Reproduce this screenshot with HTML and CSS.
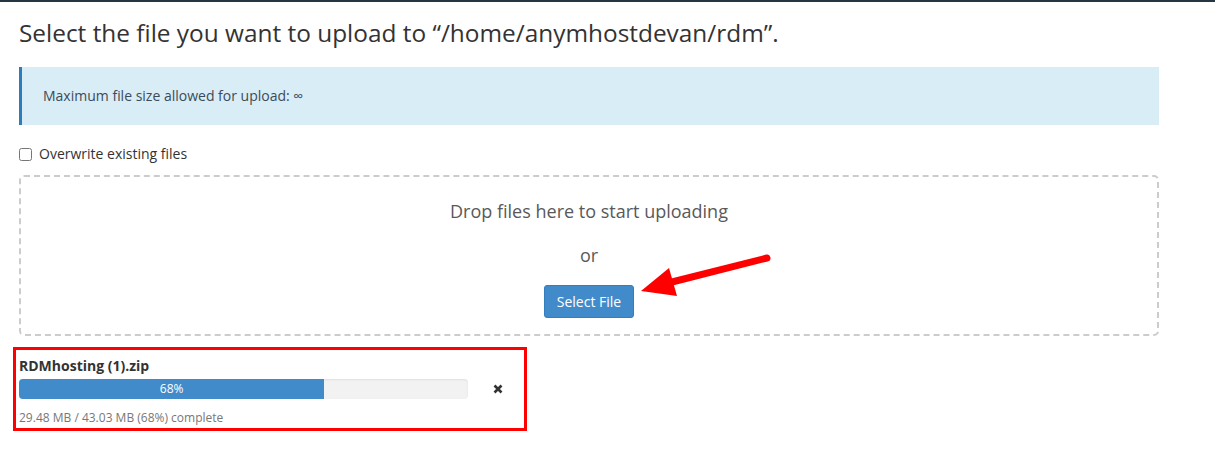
FILE: index.html
```html
<!DOCTYPE html>
<html lang="en">
<head>
<meta charset="utf-8">
<title>Upload</title>
<link rel="stylesheet" href="styles.css">
</head>
<body>
<div class="topbar"></div>
<main class="page">
  <h1 class="title">Select the file you want to upload to “/home/anymhostdevan/rdm”.</h1>
  <div class="alert">Maximum file size allowed for upload: ∞</div>
  <label class="check-row"><input type="checkbox" class="check"> Overwrite existing files</label>
  <section class="dropzone">
    <p class="drop-text">Drop files here to start uploading</p>
    <p class="drop-or">or</p>
    <button class="btn" type="button">Select File</button>
  </section>
  <div class="upload">
    <div class="file-name">RDMhosting (1).zip</div>
    <div class="progress-row">
      <div class="progress"><div class="progress-fill" style="width:68%">68%</div></div>
      <svg class="cancel" width="10" height="10" viewBox="0 0 10 10"><path d="M1.5 1.5 L8.5 8.5 M8.5 1.5 L1.5 8.5" stroke="#333" stroke-width="2.6" stroke-linecap="butt"/></svg>
    </div>
    <div class="status">29.48 MB / 43.03 MB (68%) complete</div>
  </div>
</main>
<div class="mark-box"></div>
<svg class="arrow" width="1215" height="453" viewBox="0 0 1215 453">
  <line x1="767" y1="258" x2="668" y2="283" stroke="#f00" stroke-width="7" stroke-linecap="round"/>
  <polygon points="641,291 669,268 677,296" fill="#f00"/>
</svg>
</body>
</html>
```
FILE: styles.css
```css
html, body {
  margin: 0;
  padding: 0;
  background: #fff;
}
body {
  font-family: "Open Sans", "Liberation Sans", sans-serif;
  color: #333;
  width: 1215px;
  height: 453px;
  overflow: hidden;
  position: relative;
}
.topbar {
  height: 2px;
  background: #253544;
}
.page {
  padding: 0 0 0 19px;
  width: 1140px;
}
.title {
  margin: 18px 0 0;
  font-size: 24.4px;
  font-weight: 400;
  line-height: 26px;
  color: #333;
}
.alert {
  margin-top: 21px;
  background: #d9edf7;
  border-left: 3px solid #2d7dba;
  padding: 20px 21px;
  font-size: 14px;
  line-height: 18px;
  color: #3b4b58;
}
.check-row {
  display: flex;
  align-items: center;
  margin-top: 19px;
  height: 20px;
  font-size: 14px;
  line-height: 20px;
  color: #333;
}
.check {
  width: 13px;
  height: 13px;
  margin: 0 7px 0 0;
}
.dropzone {
  margin-top: 11px;
  border: 2px dashed #ccc;
  border-radius: 5px;
  padding: 22px 0 16px;
  display: flex;
  flex-direction: column;
  align-items: center;
  color: #595959;
}
.drop-text {
  margin: 0;
  font-size: 18px;
  line-height: 24px;
}
.drop-or {
  margin: 20px 0 0;
  font-size: 18px;
  line-height: 24px;
}
.btn {
  margin-top: 18px;
  font-family: "Open Sans", "Liberation Sans", sans-serif;
  font-size: 14px;
  line-height: 19px;
  padding: 6px 12px;
  color: #fff;
  background: #428bca;
  border: 1px solid #357ebd;
  border-radius: 3px;
}
.upload {
  margin-top: 20px;
  width: 500px;
}
.file-name {
  font-size: 14px;
  font-weight: 700;
  line-height: 20px;
  color: #333;
}
.progress-row {
  margin-top: 3px;
  display: flex;
  align-items: center;
}
.progress {
  width: 449px;
  height: 20px;
  background: #f2f2f2;
  border-radius: 4px;
  box-shadow: inset 0 1px 2px rgba(0,0,0,0.08);
  overflow: hidden;
}
.progress-fill {
  height: 20px;
  background: #428bca;
  color: #fff;
  font-size: 12px;
  line-height: 20px;
  text-align: center;
}
.cancel {
  margin-left: 25px;
}
.status {
  margin-top: 10px;
  font-size: 12px;
  line-height: 17px;
  color: #777;
}
.mark-box {
  position: absolute;
  left: 13px;
  top: 347px;
  width: 508px;
  height: 78px;
  border: 3px solid #f00;
}
.arrow {
  position: absolute;
  left: 0;
  top: 0;
  pointer-events: none;
}
```
